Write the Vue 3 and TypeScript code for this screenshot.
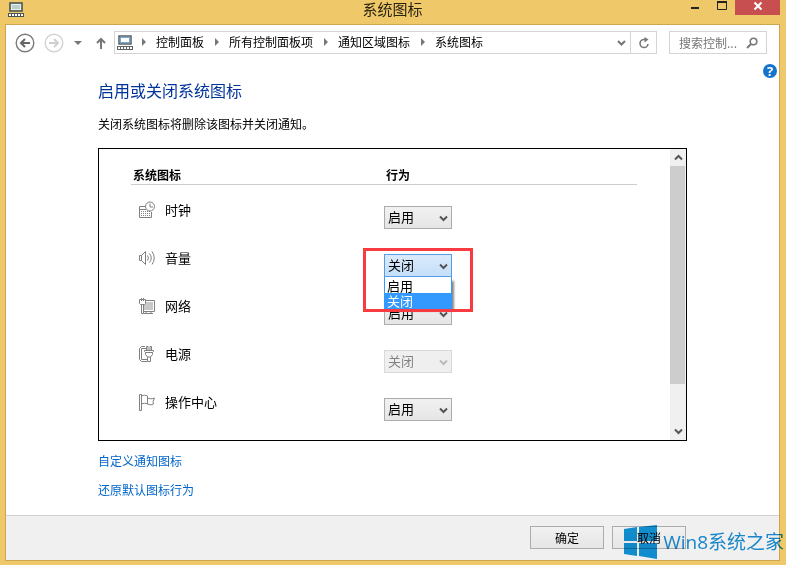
<script setup lang="ts">
import { ref } from 'vue'

type State = 'on' | 'off'
interface SystemIcon {
  id: string
  label: string
  state: State
  disabled?: boolean
  open?: boolean
}

const crumbs: string[] = ['控制面板', '所有控制面板项', '通知区域图标', '系统图标']
const options: { value: State; text: string }[] = [
  { value: 'on', text: '启用' },
  { value: 'off', text: '关闭' },
]
const icons = ref<SystemIcon[]>([
  { id: 'clock', label: '时钟', state: 'on' },
  { id: 'volume', label: '音量', state: 'off', open: true },
  { id: 'network', label: '网络', state: 'on' },
  { id: 'power', label: '电源', state: 'off', disabled: true },
  { id: 'action', label: '操作中心', state: 'on' },
])

function choose(item: SystemIcon, value: State) {
  item.state = value
  item.open = false
}
</script>

<template>
  <div class="window">
    <header class="titlebar">
      <svg class="app-icon" width="18" height="16" viewBox="0 0 18 16" aria-hidden="true">
        <rect x="3" y="1" width="12" height="8" fill="#e4eff2" stroke="#4c5350" stroke-width="1.6" />
        <rect x="5" y="3" width="8" height="4" fill="#b9d0cc" />
        <path d="M1 11h16v4H1z" fill="#4c5350" />
        <path d="M2 13h14" stroke="#fff" stroke-width="2" stroke-dasharray="2 1" />
      </svg>
      <h1>系统图标</h1>
      <div class="controls">
        <button class="ctl" aria-label="最小化">
          <svg width="10" height="10" viewBox="0 0 10 10"><path d="M1 7h8" stroke="#222" stroke-width="2" /></svg>
        </button>
        <button class="ctl" aria-label="最大化">
          <svg width="12" height="10" viewBox="0 0 12 10"><path d="M1.500 1v7.500h9V1" fill="none" stroke="#222" /><path d="M1 1h10" stroke="#222" stroke-width="2" /></svg>
        </button>
        <button class="ctl close" aria-label="关闭窗口">
          <svg width="10" height="10" viewBox="0 0 10 10"><path d="M1.500 1.500l7 7M8.500 1.500l-7 7" stroke="#fff" stroke-width="2" /></svg>
        </button>
      </div>
    </header>

    <div class="frame">
      <nav class="toolbar" aria-label="导航">
        <button class="nav-btn" aria-label="后退">
          <svg width="20" height="20" viewBox="0 0 20 20"><circle cx="10" cy="10" r="8.800" fill="none" stroke="#7b7b7b" stroke-width="1.400" /><path d="M15 10H6M10 6l-4 4 4 4" fill="none" stroke="#666" stroke-width="2" /></svg>
        </button>
        <button class="nav-btn forward" aria-label="前进" disabled>
          <svg width="20" height="20" viewBox="0 0 20 20"><circle cx="10" cy="10" r="8.800" fill="none" stroke="#d2d2d2" stroke-width="1.400" /><path d="M5 10h9M10 6l4 4-4 4" fill="none" stroke="#cfcfcf" stroke-width="2" /></svg>
        </button>
        <button class="nav-btn recent" aria-label="最近的位置">
          <svg width="8" height="4" viewBox="0 0 8 4"><path d="M0 0h8L4 4z" fill="#777" /></svg>
        </button>
        <button class="nav-btn up" aria-label="上移">
          <svg width="10" height="12" viewBox="0 0 10 12"><path d="M5 12V2M1 6l4-4 4 4" fill="none" stroke="#777" stroke-width="2" /></svg>
        </button>
        <div class="address">
          <svg width="18" height="16" viewBox="0 0 18 16" aria-hidden="true">
            <rect x="3" y="1" width="12" height="8" fill="#eef6fb" stroke="#4c5658" stroke-width="1.400" />
            <rect x="4.500" y="2.500" width="9" height="5" fill="#fff" stroke="#78a9cf" />
            <path d="M1 11h16v4H1z" fill="#5d6568" />
            <path d="M2 13h14" stroke="#fff" stroke-width="2" stroke-dasharray="2 1" />
          </svg>
          <ol class="crumbs">
            <li v-for="c in crumbs" :key="c">
              <svg width="4" height="8" viewBox="0 0 4 8" aria-hidden="true"><path d="M0 0l4 4-4 4z" fill="#777" /></svg>
              <a href="#">{{ c }}</a>
            </li>
          </ol>
          <button class="drop" aria-label="以前的位置">
            <svg width="9" height="6" viewBox="0 0 9 6"><path d="M1 1l3.500 3.500L8 1" fill="none" stroke="#777" stroke-width="2" /></svg>
          </button>
          <button class="refresh" aria-label="刷新">
            <svg width="12" height="12" viewBox="0 0 12 12"><path d="M7.500 2.500H6a4 4 0 1 0 4 4.500" fill="none" stroke="#777" stroke-width="1.600" /><path d="M6.500 0v5.500l4-3z" fill="#777" /></svg>
          </button>
        </div>
        <div class="search">
          <input type="text" placeholder="搜索控制..." aria-label="搜索控制面板" />
          <svg width="12" height="12" viewBox="0 0 12 12" aria-hidden="true"><circle cx="7.500" cy="4.500" r="3.300" fill="none" stroke="#777" stroke-width="1.600" /><path d="M5 7L1 11" stroke="#777" stroke-width="2" /></svg>
        </div>
      </nav>

      <main class="content">
        <a class="help" href="#" aria-label="帮助">?</a>
        <h2>启用或关闭系统图标</h2>
        <p>关闭系统图标将删除该图标并关闭通知。</p>

        <section class="panel">
          <div class="list">
            <table>
              <thead>
                <tr><th scope="col">系统图标</th><th scope="col">行为</th></tr>
              </thead>
              <tbody>
                <tr v-for="item in icons" :key="item.id">
                  <td>
                    <label class="name" :for="item.id">
                      <svg width="18" height="18" viewBox="0 0 18 18" fill="none" stroke="#808080" aria-hidden="true">
                        <template v-if="item.id === 'clock'">
                          <path d="M8 5.500H1.500v11h12V11M1.500 8.500H8" />
                          <path d="M3 10.500h9M3 12.500h9M3 14.500h9" stroke-dasharray="1 1" />
                          <circle cx="12" cy="5.500" r="4.500" fill="#fff" /><path d="M12 2.500v3.500h3" />
                        </template>
                        <template v-else-if="item.id === 'volume'">
                          <path d="M1.500 6.500h2l4-4v13l-4-4h-2zM3.500 6.500v5M9.500 6.500q2 2.500 0 5M11.500 4.500q3.500 4.500 0 9M14 2.500q4.500 6.500 0 13" />
                        </template>
                        <template v-else-if="item.id === 'network'">
                          <path d="M5 3.500h11.500v11H5.500" />
                          <path d="M6 5h9v8H6z" fill="#c8c8c8" stroke="none" />
                          <path d="M6 16.500h9M8 14.500v2M13 14.500v2" />
                          <path d="M1.500 2.500h6v4l-1 1h-4l-1-1z" fill="#fff" />
                          <path d="M3.500 1v3M5.500 1v3M3.500 7.500v9h2v-9" />
                        </template>
                        <template v-else-if="item.id === 'power'">
                          <path d="M7 1.500H3.500l-2 2v11l2 2H9M8 3.500H3.500v11H9" />
                          <path d="M6.500 5.500h9v1l-1 1v2l-2 2.500h-3L7.500 9.500v-2l-1-1z" fill="#fff" />
                          <path d="M8.500 5.500v-4h1.500v4M12 5.500v-4h1.500v4M9.500 12v4.500h3V12M7.500 7.500h7" />
                        </template>
                        <template v-else>
                          <path d="M1.500 1.500h2v16h-2zM3.500 3c2-1 4-1 6 0v8c-2-1-4-1-6 0M9.500 5c2 1 5 1 7 0l-1.500 3.500.500 2.500c-2 1-4 1-6 0" />
                        </template>
                      </svg>
                      <span>{{ item.label }}</span>
                    </label>
                  </td>
                  <td>
                    <div class="combo" :class="{ active: item.open, off: item.disabled }">
                      <select :id="item.id" v-model="item.state" :disabled="item.disabled">
                        <option v-for="o in options" :key="o.value" :value="o.value">{{ o.text }}</option>
                      </select>
                      <svg class="chev" width="9" height="7" viewBox="0 0 9 7" aria-hidden="true"><path d="M1 1.500l3.500 3.500L8 1.500" fill="none" stroke="currentColor" stroke-width="2" /></svg>
                      <ul v-if="item.open" class="popup" role="listbox" :aria-label="item.label">
                        <li
                          v-for="o in options"
                          :key="o.value"
                          role="option"
                          :aria-selected="o.value === item.state"
                          @click="choose(item, o.value)"
                        >{{ o.text }}</li>
                      </ul>
                      <div v-if="item.open" class="marker"></div>
                    </div>
                  </td>
                </tr>
              </tbody>
            </table>
          </div>
          <div class="scrollbar">
            <button aria-label="向上滚动"><svg width="9" height="7" viewBox="0 0 9 7"><path d="M1 5.500L4.500 2 8 5.500" fill="none" stroke="#555" stroke-width="2" /></svg></button>
            <div class="track"><div class="thumb"></div></div>
            <button aria-label="向下滚动"><svg width="9" height="7" viewBox="0 0 9 7"><path d="M1 1.500L4.500 5 8 1.500" fill="none" stroke="#555" stroke-width="2" /></svg></button>
          </div>
        </section>

        <div class="links">
          <a href="#">自定义通知图标</a>
          <a href="#">还原默认图标行为</a>
        </div>
      </main>

      <footer class="footer">
        <button>确定</button>
        <button>取消</button>
      </footer>
    </div>

    <div class="brand">
      <svg width="33" height="34" viewBox="0 0 33 34" aria-hidden="true">
        <path d="M0 4l13-2v14H0zM15 2l18-2v16H15zM0 18h13v13L0 29zM15 18h18v16l-18-3z" fill="#1296dc" />
      </svg>
      <span>Win8系统之家</span>
    </div>
  </div>
</template>

<style>
body {
  margin: 0;
}
</style>

<style scoped>
.window,
.window * {
  box-sizing: border-box;
}
.window {
  position: relative;
  display: flex;
  flex-direction: column;
  min-height: 100vh;
  padding: 0 6px 4px 5px;
  overflow: hidden;
  background: #efc869;
  color: #000;
  font: 12px/16px "Noto Sans CJK SC", sans-serif;
}
button,
input,
select {
  font: inherit;
  color: inherit;
  margin: 0;
  padding: 0;
  border: 0;
  background: none;
  border-radius: 0;
}
button {
  display: flex;
  align-items: center;
  justify-content: center;
}
svg {
  display: block;
  flex: none;
}
a {
  color: inherit;
  text-decoration: none;
}
h1,
h2,
p,
ol,
ul {
  margin: 0;
  padding: 0;
  font-weight: 400;
  list-style: none;
}

.titlebar {
  display: grid;
  grid-template-columns: 1fr auto 1fr;
  align-items: start;
  height: 24px;
}
.app-icon {
  margin: 2px 0 0 2px;
}
h1 {
  font-size: 15px;
  line-height: 18px;
  color: #2a2415;
}
.controls {
  display: flex;
  justify-content: flex-end;
}
.ctl {
  width: 27px;
  height: 12px;
}
.ctl.close {
  width: 45px;
  height: 15px;
  background: #c84f50;
  padding-bottom: 4px;
}

.frame {
  flex: 1;
  display: flex;
  flex-direction: column;
  border: 1px solid #cfa650;
  background: #fff;
}

.toolbar {
  display: flex;
  align-items: center;
  padding: 6px 12px 0 9px;
}
.forward {
  margin-left: 9px;
}
.recent {
  margin-left: 10px;
}
.up {
  margin: 0 8px 0 14px;
}
.address {
  flex: 1;
  display: flex;
  align-items: center;
  height: 23px;
  margin-right: 12px;
  padding-left: 1px;
  border: 1px solid #d4d4d4;
}
.crumbs {
  flex: 1;
  display: flex;
  gap: 11px;
  padding: 0 0 2px 8px;
}
.crumbs li {
  display: flex;
  align-items: center;
  gap: 10px;
}
.drop {
  width: 18px;
  height: 21px;
}
.refresh {
  width: 26px;
  height: 21px;
  border-left: 1px solid #d4d4d4;
}
.search {
  display: flex;
  align-items: center;
  width: 98px;
  height: 23px;
  padding: 0 8px 0 9px;
  border: 1px solid #d4d4d4;
}
.search input {
  flex: 1;
  min-width: 0;
  outline: 0;
}
.search input::placeholder {
  color: #777;
  opacity: 1;
}

.content {
  position: relative;
  flex: 1;
  padding: 26px 92px 16px;
}
.help {
  position: absolute;
  top: 10px;
  right: 2px;
  width: 14px;
  height: 14px;
  border-radius: 50%;
  background: #1474cc;
  color: #fff;
  font: bold 13px/14px "Open Sans", sans-serif;
  text-align: center;
}
h2 {
  font-size: 16px;
  line-height: 20px;
  color: #003399;
}
p {
  margin: 16px 0;
}

.panel {
  display: flex;
  border: 1px solid #000;
}
.list {
  flex: 1;
  padding: 16px 33px 2px 32px;
}
table {
  width: 100%;
  table-layout: fixed;
  border-spacing: 0;
}
th {
  height: 20px;
  padding: 0 2px;
  border-bottom: 1px solid #ccc;
  text-align: left;
  font-weight: 700;
}
tbody::before {
  content: "";
  display: block;
  height: 13px;
}
td {
  height: 48px;
  padding: 3px 0 0;
  vertical-align: top;
}
td + td {
  padding-top: 8px;
}
.name {
  display: flex;
  align-items: center;
  gap: 9px;
  padding-left: 7px;
  font-size: 13px;
  line-height: 16px;
}
.combo {
  position: relative;
  width: 68px;
  color: #555;
}
select {
  appearance: none;
  display: block;
  width: 100%;
  height: 23px;
  padding: 0 0 2px 3px;
  border: 1px solid #acacac;
  background: linear-gradient(#f1f1f1, #e6e6e6);
  color: #000;
  font-size: 13px;
}
.chev {
  position: absolute;
  right: 4px;
  top: 9px;
  pointer-events: none;
}
.active select {
  border-color: #569de5;
  background: linear-gradient(#dbeafb, #c4dff9);
}
.off {
  color: #bbb;
}
.off select {
  border-color: #d9d9d9;
  background: #efefef;
  color: #838383;
  opacity: 1;
}
.popup {
  position: absolute;
  z-index: 1;
  top: 23px;
  left: 0;
  width: 68px;
  padding-top: 1px;
  border: 1px solid #3399ff;
  border-top: 0;
  background: #fff;
  box-shadow: 3px 3px 2px -1px #888;
  color: #000;
  font-size: 13px;
  line-height: 15px;
}
.popup li {
  height: 15px;
  padding-left: 2px;
}
.popup li[aria-selected="true"] {
  background: #3399ff;
  color: #fff;
}
.marker {
  position: absolute;
  z-index: 2;
  top: -6px;
  left: -21px;
  width: 110px;
  height: 64px;
  border: 3px solid #f83a41;
  pointer-events: none;
}

.scrollbar {
  display: flex;
  flex-direction: column;
  width: 16px;
  background: #f0f0f0;
}
.scrollbar button {
  height: 17px;
}
.track {
  flex: 1;
}
.thumb {
  height: 85%;
  width: 15px;
  background: #cdcdcd;
}

.links {
  display: flex;
  flex-direction: column;
  align-items: flex-start;
  gap: 13px;
  padding-top: 12px;
  color: #0066cc;
}

.footer {
  display: flex;
  justify-content: flex-end;
  gap: 8px;
  padding: 10px 93px 11px;
  border-top: 1px solid #d2d2d2;
  background: #f0f0f0;
}
.footer button {
  width: 74px;
  height: 23px;
  border: 1px solid #acacac;
  background: linear-gradient(#f1f1f1, #e6e6e6);
}

.brand {
  position: absolute;
  right: 2px;
  bottom: 6px;
  display: flex;
  align-items: center;
  gap: 6px;
  color: #1a8fd6;
  font: 19px/28px "Open Sans", "Noto Sans CJK SC", sans-serif;
  mix-blend-mode: multiply;
  pointer-events: none;
}
</style>
